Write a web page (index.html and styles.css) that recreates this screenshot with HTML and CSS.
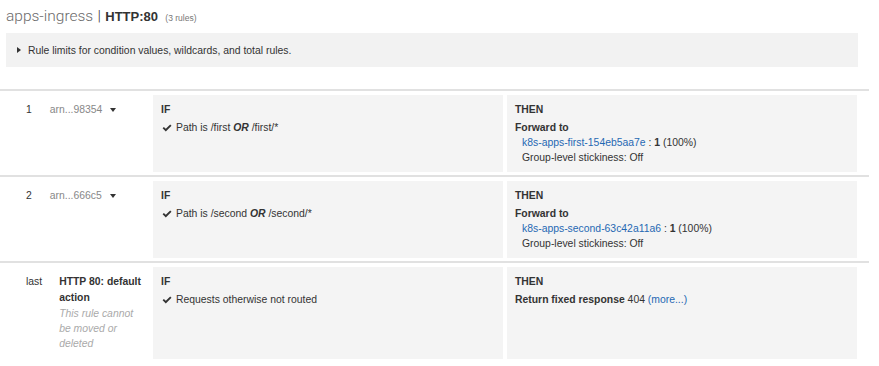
FILE: index.html
```html
<!DOCTYPE html>
<html lang="en">
<head>
<meta charset="UTF-8" />
<title>apps-ingress | HTTP:80</title>
<link rel="stylesheet" href="styles.css">
</head>
<body>

<h2 class="title"><span class="lb-name">apps-ingress</span> <span class="sep">|</span> <b>HTTP:80</b> <small>(3 rules)</small></h2>

<div class="notice">
  <span class="tri"></span>
  Rule limits for condition values, wildcards, and total rules.
</div>

<div class="rules">

  <div class="rule">
    <div class="meta">
      <span class="num">1</span>
      <span class="arn">arn...98354 <span class="caret"></span></span>
    </div>
    <div class="cell">
      <div class="head">IF</div>
      <div class="cond"><svg class="check" viewBox="0 0 10 8"><path d="M0.6 4.2 L1.9 2.9 L3.8 4.8 L8.2 0.4 L9.5 1.7 L3.8 7.4 Z"/></svg>Path is /first <b><i>OR</i></b> /first/*</div>
    </div>
    <div class="cell">
      <div class="head">THEN</div>
      <div class="action">Forward to</div>
      <div class="target"><a href="#">k8s-apps-first-154eb5aa7e</a> : <b>1</b> (100%)</div>
      <div class="sticky">Group-level stickiness: Off</div>
    </div>
  </div>

  <div class="rule">
    <div class="meta">
      <span class="num">2</span>
      <span class="arn">arn...666c5 <span class="caret"></span></span>
    </div>
    <div class="cell">
      <div class="head">IF</div>
      <div class="cond"><svg class="check" viewBox="0 0 10 8"><path d="M0.6 4.2 L1.9 2.9 L3.8 4.8 L8.2 0.4 L9.5 1.7 L3.8 7.4 Z"/></svg>Path is /second <b><i>OR</i></b> /second/*</div>
    </div>
    <div class="cell">
      <div class="head">THEN</div>
      <div class="action">Forward to</div>
      <div class="target"><a href="#">k8s-apps-second-63c42a11a6</a> : <b>1</b> (100%)</div>
      <div class="sticky">Group-level stickiness: Off</div>
    </div>
  </div>

  <div class="rule">
    <div class="meta">
      <span class="num">last</span>
      <span class="default">
        <b>HTTP 80: default action</b>
        <i>This rule cannot be moved or deleted</i>
      </span>
    </div>
    <div class="cell">
      <div class="head">IF</div>
      <div class="cond"><svg class="check" viewBox="0 0 10 8"><path d="M0.6 4.2 L1.9 2.9 L3.8 4.8 L8.2 0.4 L9.5 1.7 L3.8 7.4 Z"/></svg>Requests otherwise not routed</div>
    </div>
    <div class="cell">
      <div class="head">THEN</div>
      <div class="fixed"><b>Return fixed response</b> 404 <a href="#">(more...)</a></div>
    </div>
  </div>

</div>

</body>
</html>
```

FILE: styles.css
```css
body {
  margin: 0;
  padding: 0;
  background: #fff;
  color: #333;
  font-family: "Liberation Sans", Arial, sans-serif;
  font-size: 10.4px;
  line-height: 15px;
}
a {
  color: #1f68b3;
  text-decoration: none;
}

.title {
  margin: 0;
  padding: 5px 6px 0;
  height: 28px;
  font-size: 15.5px;
  line-height: 22px;
  font-weight: normal;
  color: #333;
}
.title .lb-name,
.title .sep {
  font-family: Roboto, "Liberation Sans", sans-serif;
  font-weight: 300;
  color: #6b6b6b;
}
.title .sep {
  color: #333;
}
.title b {
  font-size: 13px;
  font-weight: bold;
}
.title small {
  font-size: 8.5px;
  color: #777;
  margin-left: 3px;
}

.notice {
  margin: 0 21px 0 6px;
  height: 34px;
  background: #f2f2f2;
  display: flex;
  align-items: center;
  padding-left: 11px;
  gap: 7px;
  color: #333;
}
.tri {
  width: 0;
  height: 0;
  border-top: 3.5px solid transparent;
  border-bottom: 3.5px solid transparent;
  border-left: 4px solid #333;
}

.rules {
  margin-top: 22px;
  width: 869px;
}
.rule {
  border-top: 2px solid #e1e1e1;
  padding: 4px 0 3px;
  display: grid;
  grid-template-columns: 149px 350px 350px;
  column-gap: 4px;
}

.meta {
  display: flex;
  gap: 17px;
  padding: 7px 4px 8px 26px;
}
.num {
  color: #333;
}
.arn {
  color: #888;
  display: flex;
  align-items: center;
  gap: 6px;
  height: 15px;
  margin-left: 1px;
}
.caret {
  width: 0;
  height: 0;
  border-left: 3.5px solid transparent;
  border-right: 3.5px solid transparent;
  border-top: 4px solid #333;
  margin-left: 2px;
}
.default {
  flex: 1;
}
.default b {
  display: block;
  color: #333;
  line-height: 16px;
}
.default i {
  display: block;
  color: #aaa;
}

.cell {
  background: #f4f4f4;
  padding: 7px 8px;
  min-height: 63px;
}
.head {
  font-weight: bold;
  color: #333;
  margin-bottom: 3px;
}
.cond {
  color: #333;
}
.check {
  width: 10px;
  height: 8px;
  margin: 0 4px 0 1px;
  vertical-align: -1px;
  fill: #333;
}
.action {
  font-weight: bold;
}
.target,
.sticky {
  padding-left: 7px;
}
```
